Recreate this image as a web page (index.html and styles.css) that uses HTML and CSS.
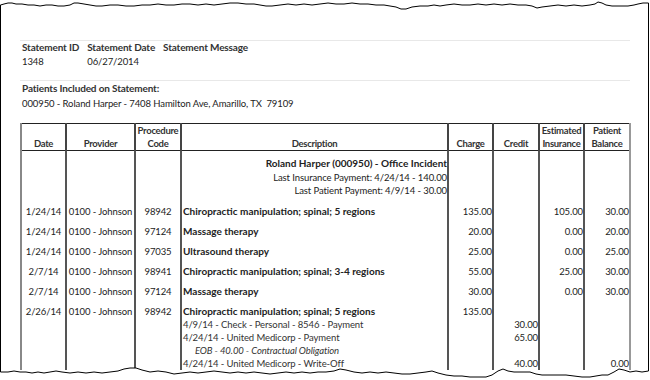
FILE: index.html
```html
<!DOCTYPE html>
<html>
<head>
<meta charset="utf-8">
<link rel="stylesheet" href="styles.css">
</head>
<body>
<div class="sheet">
  <div class="rule"></div>
  <div class="stmt">
    <div class="lbl">Statement ID</div>
    <div class="lbl">Statement Date</div>
    <div class="lbl">Statement Message</div>
    <div>1348</div>
    <div>06/27/2014</div>
    <div></div>
  </div>
  <div class="rule rule2"></div>
  <div class="patients">
    <div class="lbl">Patients Included on Statement:</div>
    <div class="addr">000950 - Roland Harper - 7408 Hamilton Ave, Amarillo, TX&nbsp; 79109</div>
  </div>
  <table class="ledger">
    <colgroup>
      <col class="c-date"><col class="c-prov"><col class="c-code"><col class="c-desc">
      <col class="c-amt"><col class="c-amt2"><col class="c-amt"><col class="c-amt2">
    </colgroup>
    <thead>
      <tr>
        <th>Date</th><th>Provider</th><th>Procedure<br>Code</th><th>Description</th>
        <th>Charge</th><th>Credit</th><th>Estimated<br>Insurance</th><th>Patient<br>Balance</th>
      </tr>
    </thead>
    <tbody>
      <tr class="patient">
        <td></td><td></td><td></td>
        <td class="summary">
          <div class="b">Roland Harper (000950) - Office Incident</div>
          <div>Last Insurance Payment: 4/24/14 - 140.00</div>
          <div>Last Patient Payment: 4/9/14 - 30.00</div>
        </td>
        <td></td><td></td><td></td><td></td>
      </tr>
      <tr class="svc">
        <td class="ctr">1/24/14</td><td class="ctr">0100 - Johnson</td><td class="ctr">98942</td>
        <td class="desc">Chiropractic manipulation; spinal; 5 regions</td>
        <td class="num">135.00</td><td class="num"></td><td class="num">105.00</td><td class="num">30.00</td>
      </tr>
      <tr class="svc">
        <td class="ctr">1/24/14</td><td class="ctr">0100 - Johnson</td><td class="ctr">97124</td>
        <td class="desc">Massage therapy</td>
        <td class="num">20.00</td><td class="num"></td><td class="num">0.00</td><td class="num">20.00</td>
      </tr>
      <tr class="svc">
        <td class="ctr">1/24/14</td><td class="ctr">0100 - Johnson</td><td class="ctr">97035</td>
        <td class="desc">Ultrasound therapy</td>
        <td class="num">25.00</td><td class="num"></td><td class="num">0.00</td><td class="num">25.00</td>
      </tr>
      <tr class="svc">
        <td class="ctr">2/7/14</td><td class="ctr">0100 - Johnson</td><td class="ctr">98941</td>
        <td class="desc">Chiropractic manipulation; spinal; 3-4 regions</td>
        <td class="num">55.00</td><td class="num"></td><td class="num">25.00</td><td class="num">30.00</td>
      </tr>
      <tr class="svc">
        <td class="ctr">2/7/14</td><td class="ctr">0100 - Johnson</td><td class="ctr">97124</td>
        <td class="desc">Massage therapy</td>
        <td class="num">30.00</td><td class="num"></td><td class="num">0.00</td><td class="num">30.00</td>
      </tr>
      <tr class="svc open">
        <td class="ctr">2/26/14</td><td class="ctr">0100 - Johnson</td><td class="ctr">98942</td>
        <td class="desc">Chiropractic manipulation; spinal; 5 regions</td>
        <td class="num">135.00</td><td class="num"></td><td class="num"></td><td class="num"></td>
      </tr>
      <tr class="sub">
        <td></td><td></td><td></td>
        <td class="line">4/9/14 - Check - Personal - 8546 - Payment</td>
        <td class="num"></td><td class="num">30.00</td><td class="num"></td><td class="num"></td>
      </tr>
      <tr class="sub">
        <td></td><td></td><td></td>
        <td class="line">4/24/14 - United Medicorp - Payment</td>
        <td class="num"></td><td class="num">65.00</td><td class="num"></td><td class="num"></td>
      </tr>
      <tr class="sub">
        <td></td><td></td><td></td>
        <td class="line eob">EOB - 40.00 - Contractual Obligation</td>
        <td class="num"></td><td class="num"></td><td class="num"></td><td class="num"></td>
      </tr>
      <tr class="sub">
        <td></td><td></td><td></td>
        <td class="line">4/24/14 - United Medicorp - Write-Off</td>
        <td class="num"></td><td class="num">40.00</td><td class="num"></td><td class="num">0.00</td>
      </tr>
      <tr class="sub">
        <td></td><td></td><td></td><td class="line"></td>
        <td class="num"></td><td class="num"></td><td class="num"></td><td class="num"></td>
      </tr>
    </tbody>
  </table>
</div>
<svg class="tear tear-top" width="650" height="14" viewBox="0 0 650 14">
  <polygon class="mask" points="0,0 650,0 650,3 643,3 638,4 634,5 628,6 620,6 612,6 606,5 602,3 598,2 595,4 590,5 582,6 574,5 566,6 558,5 550,6 542,7 537,8 532,6 526,5 518,5 510,4 502,5 494,4 486,5 478,4 470,5 462,5 454,4 446,5 440,6 434,5 428,6 420,6 412,7 406,9 401,9 396,7 390,6 384,5 376,5 368,4 360,4 352,3 344,4 336,4 328,3 320,4 312,5 304,4 296,5 288,4 280,5 272,6 266,6 260,5 254,4 246,4 238,3 230,3 222,4 214,5 206,4 198,5 190,4 182,4 174,5 166,5 158,4 150,5 142,5 134,6 126,6 118,5 110,5 102,6 96,6 90,5 84,4 78,3 74,3 70,5 64,6 58,6 52,5 46,5 40,6 34,5 28,5 22,4 16,4 12,3 8,3 4,4 0,5"/>
  <polyline class="edge" points="0.5,5 4,4 8,3 12,3 16,4 22,4 28,5 34,5 40,6 46,5 52,5 58,6 64,6 70,5 74,3 78,3 84,4 90,5 96,6 102,6 110,5 118,5 126,6 134,6 142,5 150,5 158,4 166,5 174,5 182,4 190,4 198,5 206,4 214,5 222,4 230,3 238,3 246,4 254,4 260,5 266,6 272,6 280,5 288,4 296,5 304,4 312,5 320,4 328,3 336,4 344,4 352,3 360,4 368,4 376,5 384,5 390,6 396,7 401,9 406,9 412,7 420,6 428,6 434,5 440,6 446,5 454,4 462,5 470,5 478,4 486,5 494,4 502,5 510,4 518,5 526,5 532,6 537,8 542,7 550,6 558,5 566,6 574,5 582,6 590,5 595,4 598,2 602,3 606,5 612,6 620,6 628,6 634,5 638,4 643,3 648.5,3"/>
</svg>
<svg class="tear tear-bottom" width="650" height="18" viewBox="0 362 650 18">
  <polygon class="mask" points="0,380 650,380 650,371 648,371 642,372 636,371 630,372 624,370 619,369 614,372 608,375 602,375 596,376 590,377 582,377 574,376 566,375 558,375 550,375 542,375 536,374 530,372 522,372 514,372 508,371 503,369 498,371 492,375 486,377 478,377 470,377 462,376 454,376 446,375 438,373 432,371 426,372 418,373 410,374 402,374 394,373 386,372 378,373 370,372 362,373 354,372 346,370 340,369 334,371 326,372 318,372 310,373 302,372 294,373 286,372 278,373 270,374 262,373 254,372 246,373 238,372 230,373 222,372 214,371 206,372 198,373 190,372 182,373 174,374 166,372 158,371 150,372 142,370 136,368 130,368 124,369 118,371 110,372 102,373 94,372 86,373 78,372 70,373 62,372 56,371 50,372 44,373 38,372 32,373 26,372 20,372 14,371 8,372 4,372 0,372"/>
  <polyline class="edge" points="0.5,372 4,372 8,372 14,371 20,372 26,372 32,373 38,372 44,373 50,372 56,371 62,372 70,373 78,372 86,373 94,372 102,373 110,372 118,371 124,369 130,368 136,368 142,370 150,372 158,371 166,372 174,374 182,373 190,372 198,373 206,372 214,371 222,372 230,373 238,372 246,373 254,372 262,373 270,374 278,373 286,372 294,373 302,372 310,373 318,372 326,372 334,371 340,369 346,370 354,372 362,373 370,372 378,373 386,372 394,373 402,374 410,374 418,373 426,372 432,371 438,373 446,375 454,376 462,376 470,377 478,377 486,377 492,375 498,371 503,369 508,371 514,372 522,372 530,372 536,374 542,375 550,375 558,375 566,375 574,376 582,377 590,377 596,376 602,375 608,375 614,372 619,369 624,370 630,372 636,371 642,372 648.5,371"/>
</svg>
</body>
</html>
```

FILE: styles.css
```css
html, body {
  margin: 0;
  padding: 0;
  background: #ffffff;
}

body {
  width: 650px;
  height: 380px;
  overflow: hidden;
  position: relative;
  font-family: Lato, "Open Sans", "Liberation Sans", sans-serif;
  font-size: 9.5px;
  letter-spacing: -0.1px;
  color: #222222;
}

.sheet {
  box-sizing: border-box;
  width: 649px;
  height: 380px;
  border-left: 1px solid #000;
  border-right: 1px solid #000;
  padding: 40px 18px 0 19px;
  background: #ffffff;
}

.rule {
  height: 1px;
  background: #e8e8e8;
}

.rule2 {
  margin-top: 12px;
}

.lbl {
  font-weight: bold;
  font-size: 10px;
  letter-spacing: -0.15px;
  color: #333333;
}

.stmt {
  display: grid;
  grid-template-columns: auto auto auto 1fr;
  grid-template-rows: 13px 13px;
  column-gap: 8px;
  row-gap: 1px;
  padding-left: 2px;
  line-height: 13px;
}

.stmt > div:nth-child(3),
.stmt > div:nth-child(6) {
  grid-column: 3 / 5;
}

.patients {
  padding: 1px 0 0 2px;
  line-height: 13px;
}

.addr {
  margin-top: 2px;
}

.ledger {
  margin-top: 13px;
  width: 610px;
  table-layout: fixed;
  border-collapse: collapse;
  line-height: 13px;
}

.c-date { width: 45px; }
.c-prov { width: 69px; }
.c-code { width: 46px; }
.c-desc { width: 267px; }
.c-amt { width: 45px; }
.c-amt2 { width: 46px; }

.ledger th {
  border-left: 2px solid #444;
  border-right: 2px solid #444;
  border-top: 1px solid #222;
  border-bottom: 1px solid #222;
  font-weight: bold;
  font-size: 9.5px;
  letter-spacing: -0.3px;
  color: #333;
  vertical-align: bottom;
  text-align: center;
  padding: 0;
  white-space: nowrap;
}

.ledger td {
  border-left: 2px solid #555;
  border-right: 2px solid #555;
  padding: 0 1px;
  white-space: nowrap;
  vertical-align: top;
}

.ledger th:first-child,
.ledger td:first-child {
  border-left-color: #888;
}

.ledger th:last-child,
.ledger td:last-child {
  border-right-color: #999;
}

.ledger tr.patient td {
  padding-top: 6px;
  padding-bottom: 4px;
}

.ledger td.summary {
  text-align: right;
  line-height: 13.5px;
  padding-right: 0;
}

.b, .desc {
  font-weight: bold;
  font-size: 10px;
  letter-spacing: 0;
}

.ledger tr.svc td {
  padding-top: 3px;
  padding-bottom: 4px;
}

.ledger tr.svc.open td {
  padding-bottom: 0;
}

.ctr {
  text-align: center;
}

.ledger td.num {
  text-align: right;
  padding-right: 0;
}

.ledger td.line {
  color: #333;
}

.ledger td.eob {
  font-style: italic;
  padding-left: 13px;
}

.tear {
  position: absolute;
  left: 0;
  display: block;
}

.tear-top {
  top: 0;
}

.tear-bottom {
  top: 362px;
}

.mask {
  fill: #ffffff;
}

.edge {
  fill: none;
  stroke: #000;
  stroke-width: 1;
}
```
